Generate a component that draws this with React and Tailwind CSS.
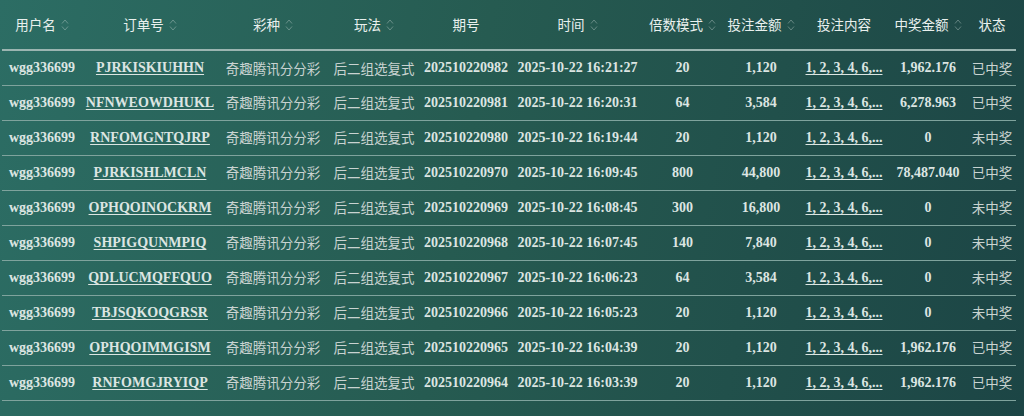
import React from "react";

const rows = [
  ["wgg336699", "PJRKISKIUHHN", "202510220982", "2025-10-22 16:21:27", "20", "1,120", "1,962.176", "已中奖"],
  ["wgg336699", "NFNWEOWDHUKL", "202510220981", "2025-10-22 16:20:31", "64", "3,584", "6,278.963", "已中奖"],
  ["wgg336699", "RNFOMGNTQJRP", "202510220980", "2025-10-22 16:19:44", "20", "1,120", "0", "未中奖"],
  ["wgg336699", "PJRKISHLMCLN", "202510220970", "2025-10-22 16:09:45", "800", "44,800", "78,487.040", "已中奖"],
  ["wgg336699", "OPHQOINOCKRM", "202510220969", "2025-10-22 16:08:45", "300", "16,800", "0", "未中奖"],
  ["wgg336699", "SHPIGQUNMPIQ", "202510220968", "2025-10-22 16:07:45", "140", "7,840", "0", "未中奖"],
  ["wgg336699", "QDLUCMQFFQUO", "202510220967", "2025-10-22 16:06:23", "64", "3,584", "0", "未中奖"],
  ["wgg336699", "TBJSQKOQGRSR", "202510220966", "2025-10-22 16:05:23", "20", "1,120", "0", "未中奖"],
  ["wgg336699", "OPHQOIMMGISM", "202510220965", "2025-10-22 16:04:39", "20", "1,120", "1,962.176", "已中奖"],
  ["wgg336699", "RNFOMGJRYIQP", "202510220964", "2025-10-22 16:03:39", "20", "1,120", "1,962.176", "已中奖"],
];

const columns = [
  { title: "用户名", w: "w-[80px]", sort: true },
  { title: "订单号", w: "w-[136px]", sort: true },
  { title: "彩种", w: "w-[110px]", sort: true },
  { title: "玩法", w: "w-[92px]", sort: true },
  { title: "期号", w: "w-[92px]", sort: false },
  { title: "时间", w: "w-[131px]", sort: true },
  { title: "倍数模式", w: "w-[79px]", sort: true },
  { title: "投注金额", w: "w-[78px]", sort: true },
  { title: "投注内容", w: "w-[88px]", sort: false },
  { title: "中奖金额", w: "w-[80px]", sort: true },
  { title: "状态", w: "w-[48px]", sort: false },
];

const SortIcon = () => (
  <svg width="8" height="14" viewBox="0 0 8 14" className="ml-[5px] opacity-40" fill="none" stroke="#c9d8d5" strokeWidth="1">
    <path d="M1 5.5 L4 2 L7 5.5" />
    <path d="M1 8.5 L4 12 L7 8.5" />
  </svg>
);

const serif = "font-['Liberation_Serif','Noto_Sans_CJK_SC',serif] font-bold text-[14px] text-[#dce5e2]";
const cjk = "font-['Noto_Sans_CJK_SC',sans-serif] text-[13.5px] text-[#c9d3d1]";

export default function App() {
  return (
    <div className="w-[1024px] h-[416px] overflow-hidden bg-[linear-gradient(100deg,#2c6d64_0%,#265b51_45%,#1c4545_100%)]">
      <table className="ml-[2px] w-[1014px] table-fixed border-collapse">
        <thead>
          <tr className="h-[50px] border-b-2 border-[#9bb5b1]">
            {columns.map((c) => (
              <th key={c.title} className={`${c.w} p-0 font-normal`}>
                <div className="flex items-center justify-center font-['Noto_Sans_CJK_SC',sans-serif] text-[13.5px] text-[#e9f0ee]">
                  {c.title}
                  {c.sort && <SortIcon />}
                </div>
              </th>
            ))}
          </tr>
        </thead>
        <tbody>
          {rows.map((r) => (
            <tr key={r[1]} className="h-[35px] border-b border-[#7fa39d]">
              <td className={`p-0 text-center ${serif}`}>{r[0]}</td>
              <td className={`p-0 text-center ${serif} text-[#c5d0cd]`}>
                <span className="underline underline-offset-2">{r[1]}</span>
              </td>
              <td className={`p-0 text-center ${cjk}`}>奇趣腾讯分分彩</td>
              <td className={`p-0 text-center ${cjk}`}>后二组选复式</td>
              <td className={`p-0 text-center ${serif}`}>{r[2]}</td>
              <td className={`p-0 text-center ${serif}`}>{r[3]}</td>
              <td className={`p-0 text-center ${serif}`}>{r[4]}</td>
              <td className={`p-0 text-center ${serif}`}>{r[5]}</td>
              <td className={`p-0 text-center ${serif} text-[#c5d0cd]`}>
                <span className="underline underline-offset-2">1, 2, 3, 4, 6,...</span>
              </td>
              <td className={`p-0 text-center ${serif}`}>{r[6]}</td>
              <td className={`p-0 text-center ${cjk}`}>{r[7]}</td>
            </tr>
          ))}
        </tbody>
      </table>
    </div>
  );
}
